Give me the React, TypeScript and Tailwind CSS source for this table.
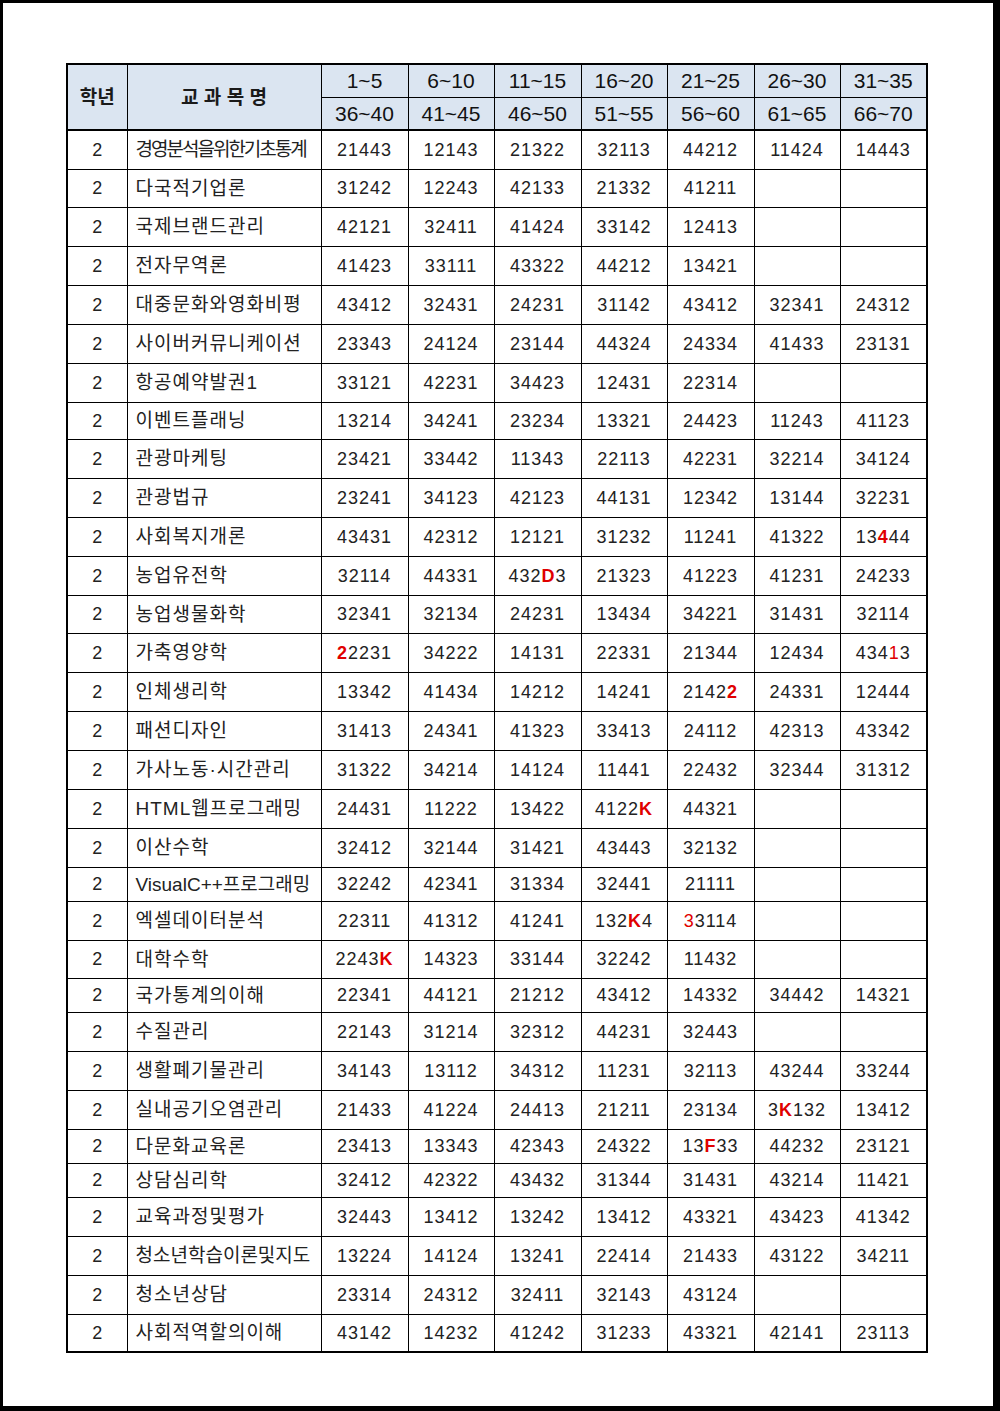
import React from 'react';

type Row = { name: string; h: number; track?: string; vals: string[] };

// [x] = red bold, {x} = red regular
const rows: Row[] = [
  { name: '경영분석을위한기초통계', h: 39, track: 'tracking-[-2px]', vals: ['21443', '12143', '21322', '32113', '44212', '11424', '14443'] },
  { name: '다국적기업론', h: 38, vals: ['31242', '12243', '42133', '21332', '41211', '', ''] },
  { name: '국제브랜드관리', h: 39, vals: ['42121', '32411', '41424', '33142', '12413', '', ''] },
  { name: '전자무역론', h: 39, vals: ['41423', '33111', '43322', '44212', '13421', '', ''] },
  { name: '대중문화와영화비평', h: 39, vals: ['43412', '32431', '24231', '31142', '43412', '32341', '24312'] },
  { name: '사이버커뮤니케이션', h: 39, vals: ['23343', '24124', '23144', '44324', '24334', '41433', '23131'] },
  { name: '항공예약발권1', h: 39, vals: ['33121', '42231', '34423', '12431', '22314', '', ''] },
  { name: '이벤트플래닝', h: 37, vals: ['13214', '34241', '23234', '13321', '24423', '11243', '41123'] },
  { name: '관광마케팅', h: 39, vals: ['23421', '33442', '11343', '22113', '42231', '32214', '34124'] },
  { name: '관광법규', h: 39, vals: ['23241', '34123', '42123', '44131', '12342', '13144', '32231'] },
  { name: '사회복지개론', h: 39, vals: ['43431', '42312', '12121', '31232', '11241', '41322', '13[4]44'] },
  { name: '농업유전학', h: 39, vals: ['32114', '44331', '432[D]3', '21323', '41223', '41231', '24233'] },
  { name: '농업생물화학', h: 38, vals: ['32341', '32134', '24231', '13434', '34221', '31431', '32114'] },
  { name: '가축영양학', h: 39, vals: ['[2]2231', '34222', '14131', '22331', '21344', '12434', '434{1}3'] },
  { name: '인체생리학', h: 39, vals: ['13342', '41434', '14212', '14241', '2142[2]', '24331', '12444'] },
  { name: '패션디자인', h: 39, vals: ['31413', '24341', '41323', '33413', '24112', '42313', '43342'] },
  { name: '가사노동·시간관리', h: 39, vals: ['31322', '34214', '14124', '11441', '22432', '32344', '31312'] },
  { name: 'HTML웹프로그래밍', h: 39, vals: ['24431', '11222', '13422', '4122[K]', '44321', '', ''] },
  { name: '이산수학', h: 39, vals: ['32412', '32144', '31421', '43443', '32132', '', ''] },
  { name: 'VisualC++프로그래밍', h: 34, track: 'tracking-[0px]', vals: ['32242', '42341', '31334', '32441', '21111', '', ''] },
  { name: '엑셀데이터분석', h: 39, vals: ['22311', '41312', '41241', '132[K]4', '{3}3114', '', ''] },
  { name: '대학수학', h: 38, vals: ['2243[K]', '14323', '33144', '32242', '11432', '', ''] },
  { name: '국가통계의이해', h: 34, vals: ['22341', '44121', '21212', '43412', '14332', '34442', '14321'] },
  { name: '수질관리', h: 39, vals: ['22143', '31214', '32312', '44231', '32443', '', ''] },
  { name: '생활폐기물관리', h: 39, vals: ['34143', '13112', '34312', '11231', '32113', '43244', '33244'] },
  { name: '실내공기오염관리', h: 39, vals: ['21433', '41224', '24413', '21211', '23134', '3[K]132', '13412'] },
  { name: '다문화교육론', h: 34, vals: ['23413', '13343', '42343', '24322', '13[F]33', '44232', '23121'] },
  { name: '상담심리학', h: 34, vals: ['32412', '42322', '43432', '31344', '31431', '43214', '11421'] },
  { name: '교육과정및평가', h: 39, vals: ['32443', '13412', '13242', '13412', '43321', '43423', '41342'] },
  { name: '청소년학습이론및지도', h: 39, track: 'tracking-[0px]', vals: ['13224', '14124', '13241', '22414', '21433', '43122', '34211'] },
  { name: '청소년상담', h: 39, vals: ['23314', '24312', '32411', '32143', '43124', '', ''] },
  { name: '사회적역할의이해', h: 38, vals: ['43142', '14232', '41242', '31233', '43321', '42141', '23113'] },
];

const top = ['1~5', '6~10', '11~15', '16~20', '21~25', '26~30', '31~35'];
const bottom = ['36~40', '41~45', '46~50', '51~55', '56~60', '61~65', '66~70'];

function Code({ v }: { v: string }) {
  const parts = v.split(/(\[[^\]]+\]|\{[^}]+\})/).filter(Boolean);
  return (
    <>
      {parts.map((p, i) => {
        if (p.startsWith('[')) return <span key={i} className="font-bold text-[#e00000]">{p.slice(1, -1)}</span>;
        if (p.startsWith('{')) return <span key={i} className="text-[#e00000]">{p.slice(1, -1)}</span>;
        return <span key={i}>{p}</span>;
      })}
    </>
  );
}

export default function App() {
  return (
    <div className="w-[1000px] h-[1411px] box-border bg-white border-black border-t-[3px] border-l-[3px] border-r-[7px] border-b-[5px] pl-[63px] pt-[60px] font-['Liberation_Sans','Noto_Sans_CJK_KR',sans-serif]">
      <table className="table-fixed border-collapse border-2 border-black w-[861px]">
        <colgroup>
          <col className="w-[60px]" />
          <col className="w-[194px]" />
          <col className="w-[87px]" />
          <col className="w-[86px]" />
          <col className="w-[87px]" />
          <col className="w-[86px]" />
          <col className="w-[87px]" />
          <col className="w-[86px]" />
          <col className="w-[87px]" />
        </colgroup>
        <thead>
          <tr className="h-[33px] bg-[#dbe5f1]">
            <th rowSpan={2} className="border border-black border-b-2 text-[19px] font-bold text-[#1a1a1a] leading-none">학년</th>
            <th rowSpan={2} className="border border-black border-b-2 text-[19px] font-bold text-[#1a1a1a] leading-none">교 과 목 명</th>
            {top.map((t) => (
              <th key={t} className="border border-black text-[21px] font-normal text-[#111] leading-none">{t}</th>
            ))}
          </tr>
          <tr className="h-[33px] bg-[#dbe5f1]">
            {bottom.map((t) => (
              <th key={t} className="border border-black border-b-2 text-[21px] font-normal text-[#111] leading-none">{t}</th>
            ))}
          </tr>
        </thead>
        <tbody>
          {rows.map((r) => (
            <tr key={r.name} style={{ height: r.h }}>
              <td className="border border-black text-center text-[18px] text-[#222] leading-none">2</td>
              <td className={`border border-black pl-[8px] text-[19px] text-[#222] leading-none whitespace-nowrap ${r.track ?? 'tracking-[1px]'}`}>{r.name}</td>
              {r.vals.map((v, i) => (
                <td key={i} className="border border-black text-center text-[18px] tracking-[1px] text-[#222] leading-none">
                  <Code v={v} />
                </td>
              ))}
            </tr>
          ))}
        </tbody>
      </table>
    </div>
  );
}
